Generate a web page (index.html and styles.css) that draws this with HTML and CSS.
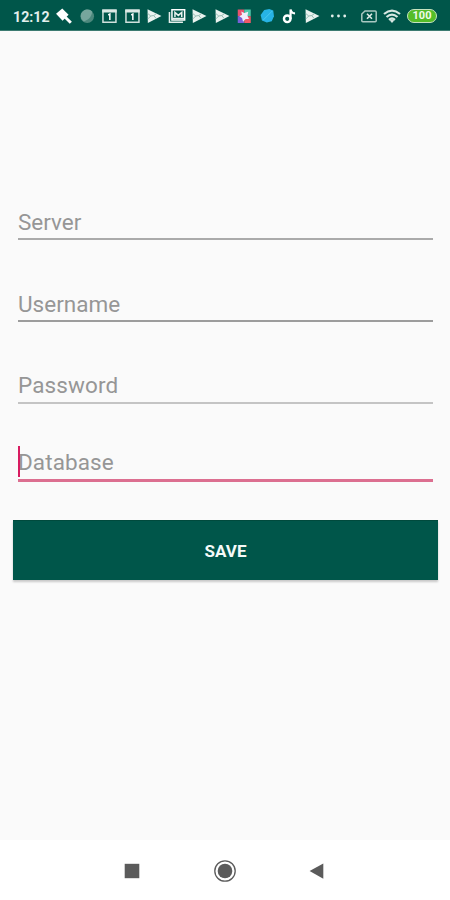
FILE: index.html
```html
<!DOCTYPE html>
<html lang="en">
<head>
<meta charset="utf-8">
<meta name="viewport" content="width=device-width, initial-scale=1">
<title>Connection settings</title>
<link rel="stylesheet" href="styles.css">
</head>
<body>
<svg width="0" height="0" class="defs" aria-hidden="true">
  <symbol id="play" viewBox="0 0 22 20"><path d="M4.3 3.2 18.2 10 4.6 17Z" fill="#e9f2ef"/><path d="m4.5 7.5 3 2.5-3 3M7.5 10l3-.5 2.5-1.7M10.5 9.7l2.5 2.8" fill="none" stroke="#8fb5ad" stroke-width=".9"/></symbol>
  <symbol id="calendar" viewBox="0 0 22 20"><path d="M4.7 4.2h13v12h-13z" fill="none" stroke="#d0e0dc" stroke-width="1.5"/><path d="M4 3.5h14.4v3H4z" fill="#dce9e5"/><path d="m10 9 1.6-1v6" fill="none" stroke="#fff" stroke-width="1.5"/></symbol>
</svg>
<div class="screen">
  <header class="status">
    <span class="clock">12:12</span>
    <div class="notifications">
      <svg viewBox="0 0 22 20"><path d="M2.8 7.8 9 2.5l6.3 6.2-6 6Z" fill="#fff"/><path d="m12 11.2 5.6 5.5" stroke="#fff" stroke-width="3"/></svg>
      <svg viewBox="0 0 22 20"><circle cx="11" cy="10.2" r="6.8" fill="#4c887d"/><path d="M5 7.5a6.6 6.6 0 0 1 11-1.8c-1 6-4 8-8.5 9.8A7 7 0 0 1 5 7.5Z" fill="#76a69d"/></svg>
      <svg><use href="#calendar"/></svg>
      <svg><use href="#calendar"/></svg>
      <svg><use href="#play"/></svg>
      <svg viewBox="0 0 22 20"><path d="M3.2 6v10.3h13.5" fill="none" stroke="#e4eeeb" stroke-width="1.5"/><path d="M5.7 3.7h12.7v10.2H5.7z" fill="none" stroke="#fff" stroke-width="1.5"/><path d="M8.7 11V6.4l3.4 3 3.4-3V11M6 12.5h12" fill="none" stroke="#e9f2ef" stroke-width="1.5"/></svg>
      <svg><use href="#play"/></svg>
      <svg><use href="#play"/></svg>
      <svg viewBox="0 0 22 20"><path d="M4.5 3.5H11v6.7H4.5z" fill="#e9526c"/><path d="M11 3.5h6.5v6.7H11z" fill="#50c9ae"/><path d="M4.5 10.2H11V17H4.5z" fill="#7860d8"/><path d="M11 10.2h6.5V17H11z" fill="#f15968"/><path d="m8 5.5 3 1.6 4-1.4-.8 4 1.5 3.4-3.3-.2-2.6 2.8-1-3.6L6 10.2l2.8-1.4Z" fill="#f2ecfa"/></svg>
      <svg viewBox="0 0 22 20"><path d="m8 4 5-1 4 1.6.7 5.6-2.2 5-5 1.4-4.8-2L4.4 9Z" fill="#27b3e4"/><path d="m7 14 9-9" stroke="#49c9ef" stroke-width="1"/></svg>
      <svg viewBox="0 0 22 20"><circle cx="9" cy="12.8" r="3.3" fill="none" stroke="#fff" stroke-width="2.4"/><path d="M12.3 13V3.4c.4 2.5 2 4 4.5 4" fill="none" stroke="#fff" stroke-width="2.2"/></svg>
      <svg><use href="#play"/></svg>
    </div>
    <svg class="more" viewBox="0 0 32 20"><g fill="#e4efec"><circle cx="9.3" cy="10" r="1.4"/><circle cx="15.5" cy="10" r="1.4"/><circle cx="21.7" cy="10" r="1.4"/></g></svg>
    <div class="system">
      <svg class="sim" viewBox="0 0 22 20"><path d="M7 5h10.2q1 0 1 1v8.7q0 1-1 1H4.8q-1 0-1-1V8Z" fill="none" stroke="#a9c8c1" stroke-width="1.5"/><path d="m9 7.8 5 5m0-5-5 5" stroke="#dceae6" stroke-width="1.6"/></svg>
      <svg class="wifi" viewBox="0 0 22 20"><g fill="none" stroke="#d7e7e2" stroke-width="2.2"><path d="M3 8q8-6.8 16 0M5.5 11q5.5-4.8 11 0M8 13.8q3-2.6 6 0"/></g><path d="m8.8 14.5 2.2 2.4 2.2-2.4q-2.2-1.3-4.4 0Z" fill="#d7e7e2"/></svg>
      <span class="battery">100</span>
    </div>
  </header>
  <main class="form">
    <div class="field server">Server</div>
    <div class="field username">Username</div>
    <div class="field password">Password</div>
    <div class="field database"><i class="caret"></i>Database</div>
    <button class="save" type="button">SAVE</button>
  </main>
  <nav class="navbar">
    <svg viewBox="0 0 24 24"><path d="M4.7 4.8h14.6v14.4H4.7z" fill="#5b5b5b"/></svg>
    <svg viewBox="0 0 24 24"><circle cx="12" cy="12" r="10.2" fill="none" stroke="#5b5b5b" stroke-width="1.3"/><circle cx="12" cy="12" r="7.3" fill="#5b5b5b"/></svg>
    <svg viewBox="0 0 24 24"><path d="M18.3 4.5v15.2L4.6 12.1Z" fill="#5b5b5b"/></svg>
  </nav>
</div>
</body>
</html>
```

FILE: styles.css
```css
* { box-sizing: border-box; }
body { margin: 0; background: #fafafa; font-family: Roboto, "Liberation Sans", sans-serif; }
.defs { display: block; height: 0; }
.screen { display: flex; flex-direction: column; width: 450px; height: 900px; overflow: hidden; background: #fafafa; }
.status { display: flex; align-items: center; height: 31px; padding: 2px 0 0 13px; background: #00564a; border-bottom: 1px solid #3c7b71; color: #e3efec; }
.clock { width: 40px; padding-top: 2px; font-size: 14.2px; line-height: 20px; font-weight: 700; white-space: nowrap; }
.notifications { display: flex; }
.notifications svg { display: block; width: 22.5px; height: 20px; }
.more { width: 32px; height: 20px; }
.system { display: flex; align-items: center; padding-left: 3px; }
.sim, .wifi { width: 22px; height: 20px; margin-right: 1px; }
.battery { width: 30px; height: 14px; margin-left: 3px; border: 1.5px solid #c6e3c0; border-radius: 7px; background: #55bd28; color: #effbe9; font-size: 11px; font-weight: 700; line-height: 12px; text-align: center; }
.form { display: flex; flex: 1; flex-direction: column; padding: 169px 12px 0 13px; }
.field { position: relative; height: 40px; margin: 0 5px; border-bottom: 2px solid #aaa; color: #969696; font-size: 22.5px; line-height: 44px; }
.username { margin-top: 42px; border-bottom-color: #9c9c9c; }
.password { margin-top: 42px; border-bottom-color: #c4c4c4; line-height: 43px; letter-spacing: .1px; }
.database { margin-top: 37px; height: 41px; border-bottom: 3px solid #dc6f90; line-height: 43px; letter-spacing: .1px; }
.caret { position: absolute; left: 0; top: 5px; width: 2px; height: 31px; background: #d81b60; }
.save { height: 60px; margin: 38px 0 0; padding: 1px 0 0; border: 0; border-top: 1px solid #004a3d; background: #00564a; box-shadow: 0 2px 2px rgba(0, 0, 0, .2); color: #f5faf8; font: 700 17px/24px Roboto, "Liberation Sans", sans-serif; }
.navbar { display: flex; align-items: center; justify-content: space-between; height: 60px; padding: 2px 121px 0 120px; background: #fff; }
.navbar svg { width: 24px; height: 24px; }
```
